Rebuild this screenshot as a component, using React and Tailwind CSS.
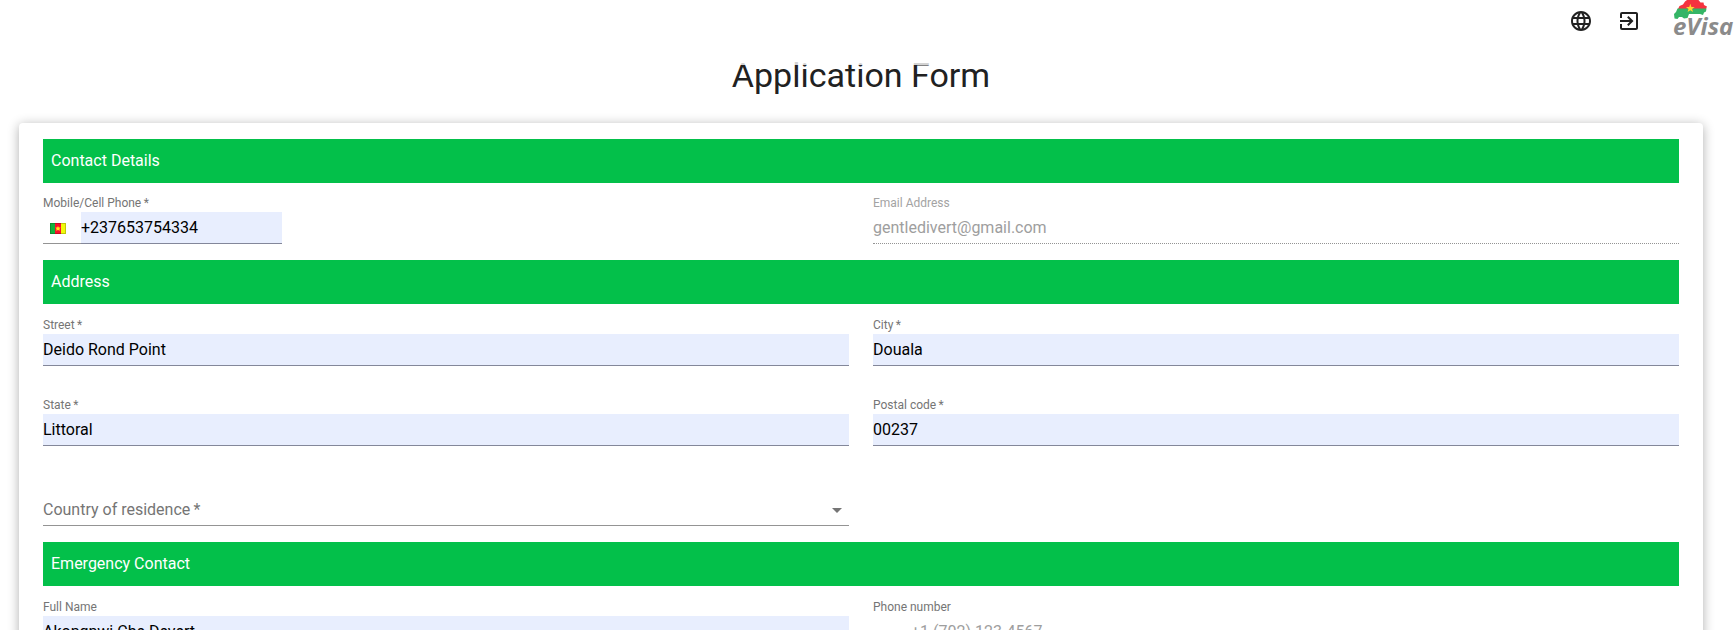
import React from "react";
import { MdLanguage, MdExitToApp } from "react-icons/md";

const lineClass = "border-b border-[#949494]";

function Banner({ children }) {
  return (
    <h2 className="flex h-11 items-center bg-[#03c04a] px-2 text-base text-white">{children}</h2>
  );
}

function Label({ id, required, disabled, children }) {
  return (
    <label
      htmlFor={id}
      className={`block pt-px pb-px text-xs leading-4 ${disabled ? "text-[#a3a3a3]" : "text-[#757575]"}`}
    >
      {children}
      {required && "\u2009*"}
    </label>
  );
}

function TextField({ id, label, value, required }) {
  return (
    <div>
      <Label id={id} required={required}>{label}</Label>
      <input
        id={id}
        type="text"
        defaultValue={value}
        className="block h-8 w-full border-b border-[#83879a] bg-[#e8eefe] text-base text-black outline-none"
      />
    </div>
  );
}

function CameroonFlag() {
  return (
    <svg width="16" height="11" viewBox="0 0 16 11" aria-hidden="true" className="shrink-0">
      <rect width="5.5" height="11" fill="#12b23c" />
      <rect x="5" width="6" height="11" fill="#f8102c" />
      <rect x="11" width="5" height="11" fill="#f0fa0a" />
      <rect x="0.5" y="0.5" width="15" height="10" fill="none" stroke="#000" strokeOpacity="0.2" />
      <path d="M8 3l.8 1.500h1.700L9.400 6l.5 1.800L8 6.900 6.100 7.800l.5-1.800L5.500 4.500h1.700z" fill="#ffe51a" />
    </svg>
  );
}

function Logo() {
  return (
    <svg width="64" height="40" viewBox="0 0 64 40" role="img" aria-label="eVisa" className="block">
      <path d="M8 9L9.500 6 13 4.500 15 1.500 17 0H28.500L30.500 2.500 33.500 2.500 34 5 37 6.500 36 9Z" fill="#f5333f" />
      <path d="M7.500 8.500H36.500L36 11.500 34 12.500 33 15 30 14 19 14 17.500 18 14 18.500 12 17 9 17 7.500 19 4.500 18.500 4 14 6 12Z" fill="#35b566" />
      <path d="M20.300 3.800l1.100 3.100h3.200l-2.500 2 .9 3.200-2.700-1.900-2.700 1.900.9-3.200-2.500-2h3.200z" fill="#fbd931" />
      <text x="3" y="34.500" fill="#8b8b8b" fontFamily="Open Sans, sans-serif" fontSize="24" fontWeight="700" fontStyle="italic">eVisa</text>
    </svg>
  );
}

export default function App() {
  return (
    <div className="h-screen overflow-hidden bg-white font-['Roboto',sans-serif] text-[#212121]">
      <header className="relative z-10 flex h-[65px] items-start justify-end bg-white/80">
        <div className="flex gap-6 pt-[9px] pr-[29px] text-2xl text-[#212121]">
          <button type="button" aria-label="Language"><MdLanguage /></button>
          <button type="button" aria-label="Sign out"><MdExitToApp /></button>
        </div>
        <Logo />
      </header>

      <main className="-mt-2.5 pr-[31px] pl-[19px]">
        <h1 className="mb-7 text-center text-[34px] leading-10">Application Form</h1>
        <form className="rounded bg-white px-6 py-4 shadow-[0_2px_12px_rgba(0,0,0,0.32)]">
          <Banner>Contact Details</Banner>
          <div className="grid grid-cols-2 gap-x-6 pt-[11px] pb-4">
            <div>
              <Label id="mobile" required>Mobile/Cell Phone</Label>
              <div className="flex h-8 w-[239px]">
                <button type="button" aria-label="Country code" className={`flex w-[38px] items-center pt-0.5 pl-[7px] ${lineClass}`}>
                  <CameroonFlag />
                </button>
                <input
                  id="mobile"
                  type="tel"
                  defaultValue="+237653754334"
                  className="min-w-0 flex-1 border-b border-[#83879a] bg-[#e8eefe] text-base text-black outline-none"
                />
              </div>
            </div>
            <div>
              <Label id="email" disabled>Email Address</Label>
              <input
                id="email"
                type="email"
                disabled
                defaultValue="gentledivert@gmail.com"
                className="block h-8 w-full border-b border-dotted border-[#949494] bg-white text-base text-[#9e9e9e]"
              />
            </div>
          </div>

          <Banner>Address</Banner>
          <div className="grid grid-cols-2 gap-x-6 gap-y-[30px] pt-3 pb-4">
            <TextField id="street" label="Street" value="Deido Rond Point" required />
            <TextField id="city" label="City" value="Douala" required />
            <TextField id="state" label="State" value="Littoral" required />
            <TextField id="postal" label="Postal code" value="00237" required />
            <div className="relative pt-[18px]">
              <select
                id="country"
                aria-label="Country of residence"
                defaultValue=""
                className={`block h-8 w-full appearance-none bg-transparent text-base text-[#757575] outline-none ${lineClass}`}
              >
                <option value="">{"Country of residence\u2009*"}</option>
                <option value="cm">Cameroon</option>
                <option value="bf">Burkina Faso</option>
              </select>
              <svg width="10" height="5" viewBox="0 0 10 5" aria-hidden="true" className="pointer-events-none absolute right-[7px] bottom-[13px]">
                <path d="M0 0h10L5 5z" fill="#757575" />
              </svg>
            </div>
          </div>

          <Banner>Emergency Contact</Banner>
          <div className="grid grid-cols-2 gap-x-6 pt-3 pb-4">
            <TextField id="full-name" label="Full Name" value="Akongnwi Che Devert" />
            <div>
              <Label id="phone">Phone number</Label>
              <input
                id="phone"
                type="tel"
                placeholder="+1 (702) 123-4567"
                className={`block h-8 w-full bg-white pl-[38px] text-base placeholder:text-[#9e9e9e] outline-none ${lineClass}`}
              />
            </div>
          </div>
        </form>
      </main>
    </div>
  );
}
